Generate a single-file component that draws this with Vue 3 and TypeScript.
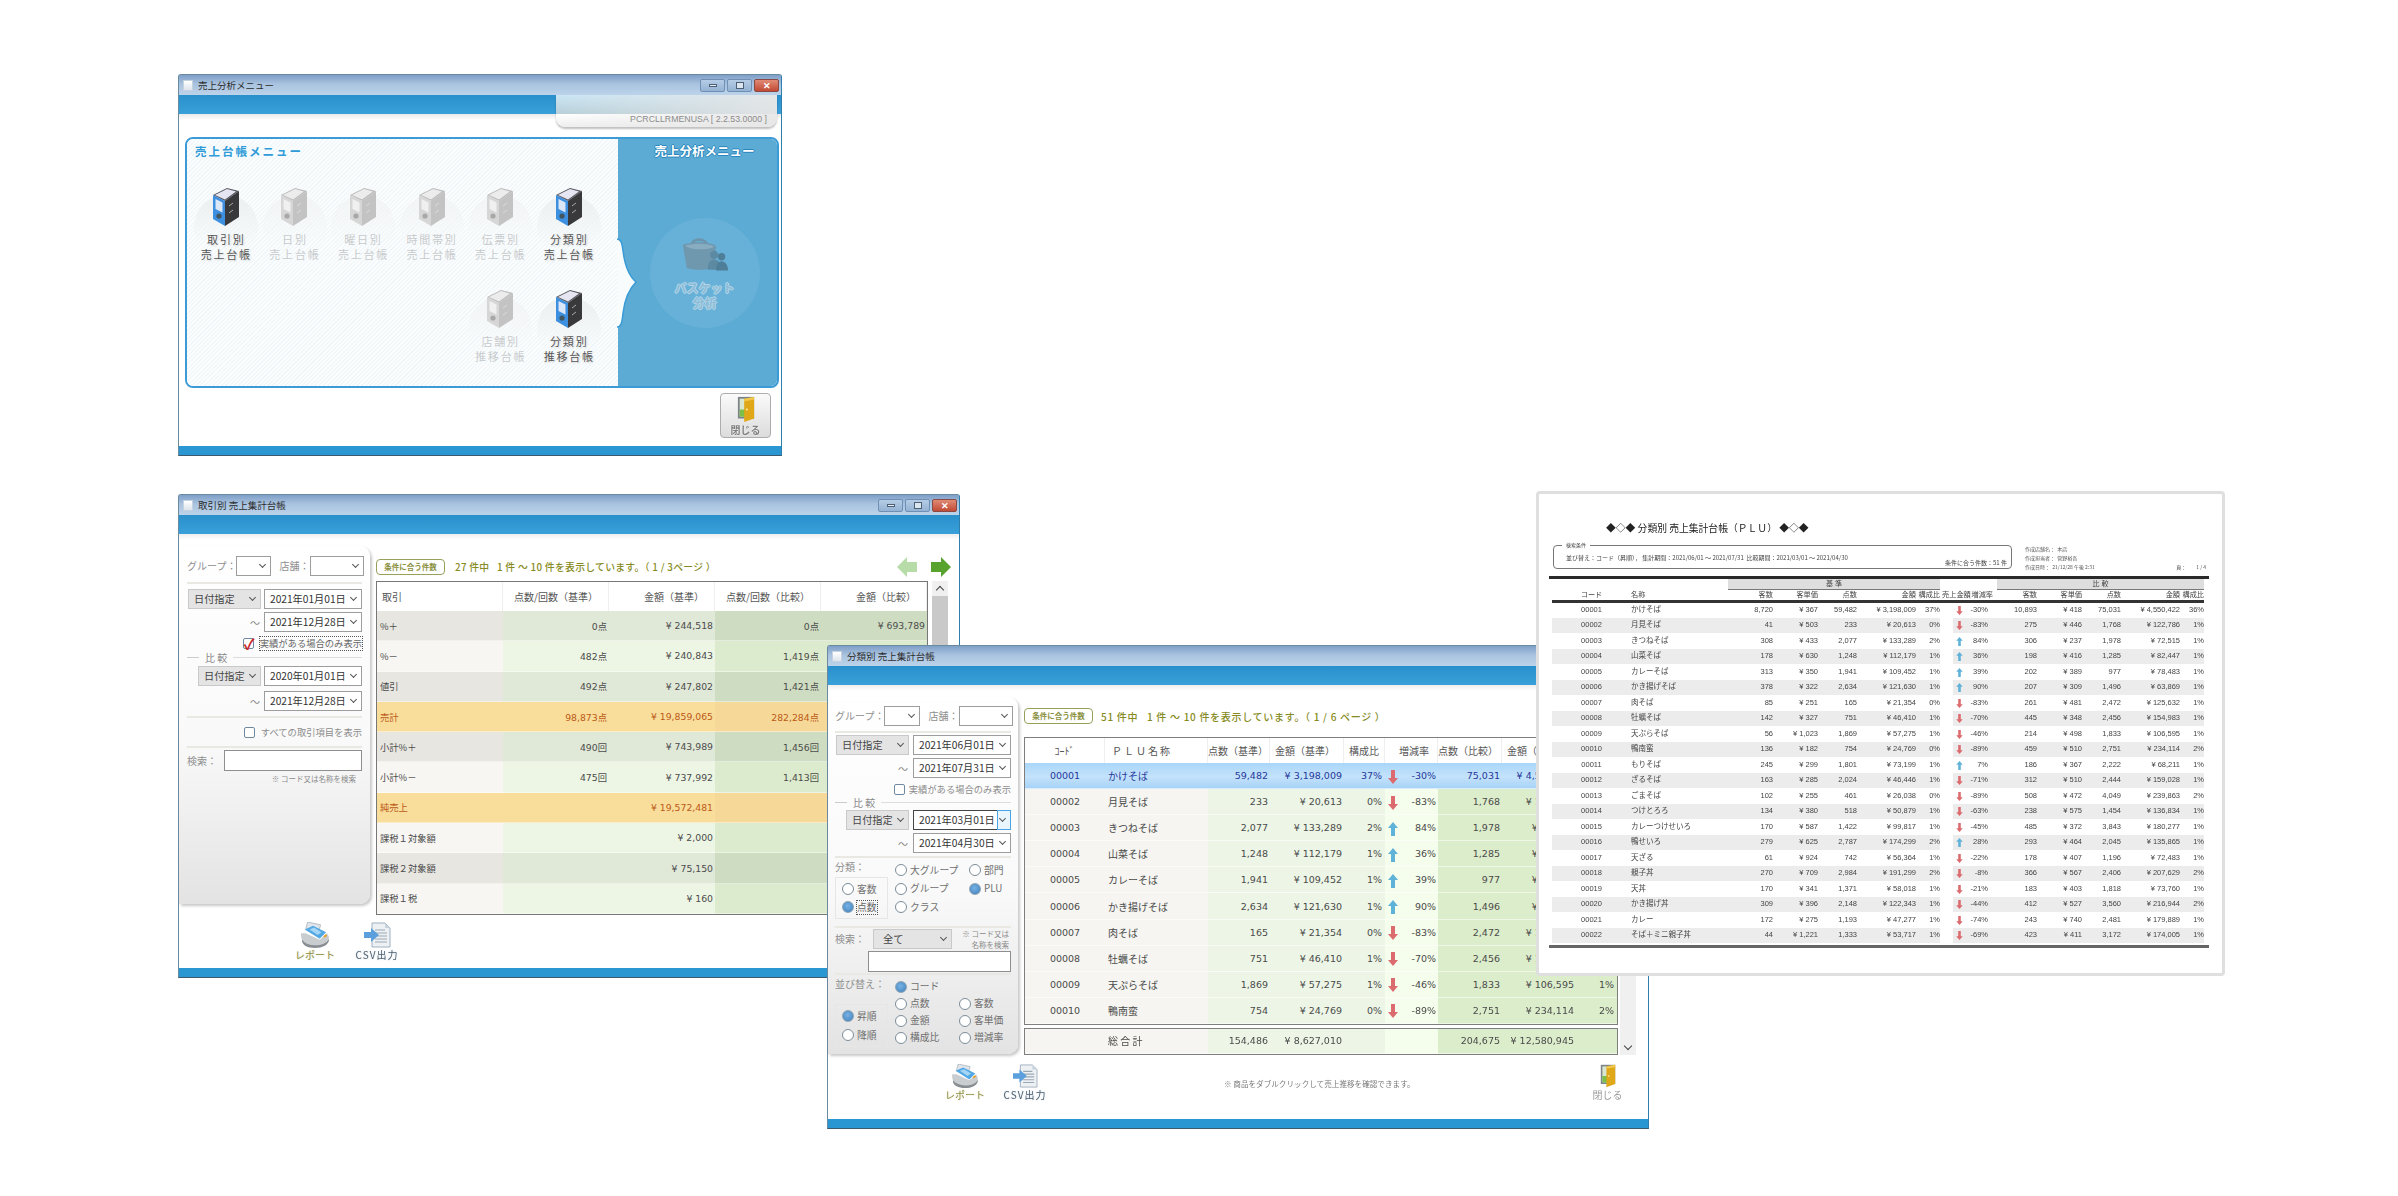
<script setup lang="ts">
interface Plu {
  code: string
  name: string
  customers: string
  unit: string
  qty: string
  amount: string
  ratio: string
  up: boolean
  rate: string
  customers2: string
  unit2: string
  qty2: string
  amount2: string
  ratio2: string
}

interface LedgerItem {
  top: string
  bottom: string
  on: boolean
  startsRow?: boolean
}

interface TradeRow {
  name: string
  qty: string
  amount: string
  qty2: string
  amount2: string
  total?: boolean
}

const ledgerItems: LedgerItem[] = [
  { top: '取引別', bottom: '売上台帳', on: true },
  { top: '日別', bottom: '売上台帳', on: false },
  { top: '曜日別', bottom: '売上台帳', on: false },
  { top: '時間帯別', bottom: '売上台帳', on: false },
  { top: '伝票別', bottom: '売上台帳', on: false },
  { top: '分類別', bottom: '売上台帳', on: true },
  { top: '店舗別', bottom: '推移台帳', on: false, startsRow: true },
  { top: '分類別', bottom: '推移台帳', on: true }
]

const tradeRows: TradeRow[] = [
  { name: '%＋', qty: '0点', amount: '¥ 244,518', qty2: '0点', amount2: '¥ 693,789' },
  { name: '%－', qty: '482点', amount: '¥ 240,843', qty2: '1,419点', amount2: '' },
  { name: '値引', qty: '492点', amount: '¥ 247,802', qty2: '1,421点', amount2: '' },
  { name: '売計', qty: '98,873点', amount: '¥ 19,859,065', qty2: '282,284点', amount2: '', total: true },
  { name: '小計%＋', qty: '490回', amount: '¥ 743,989', qty2: '1,456回', amount2: '' },
  { name: '小計%－', qty: '475回', amount: '¥ 737,992', qty2: '1,413回', amount2: '' },
  { name: '純売上', qty: '', amount: '¥ 19,572,481', qty2: '', amount2: '', total: true },
  { name: '課税１対象額', qty: '', amount: '¥ 2,000', qty2: '', amount2: '' },
  { name: '課税２対象額', qty: '', amount: '¥ 75,150', qty2: '', amount2: '' },
  { name: '課税１税', qty: '', amount: '¥ 160', qty2: '', amount2: '' }
]

const raw = `00001|かけそば|8,720|367|59,482|3,198,009|37%|d|-30%|10,893|418|75,031|4,550,422|36%
00002|月見そば|41|503|233|20,613|0%|d|-83%|275|446|1,768|122,786|1%
00003|きつねそば|308|433|2,077|133,289|2%|u|84%|306|237|1,978|72,515|1%
00004|山菜そば|178|630|1,248|112,179|1%|u|36%|198|416|1,285|82,447|1%
00005|カレーそば|313|350|1,941|109,452|1%|u|39%|202|389|977|78,483|1%
00006|かき揚げそば|378|322|2,634|121,630|1%|u|90%|207|309|1,496|63,869|1%
00007|肉そば|85|251|165|21,354|0%|d|-83%|261|481|2,472|125,632|1%
00008|牡蠣そば|142|327|751|46,410|1%|d|-70%|445|348|2,456|154,983|1%
00009|天ぷらそば|56|1,023|1,869|57,275|1%|d|-46%|214|498|1,833|106,595|1%
00010|鴨南蛮|136|182|754|24,769|0%|d|-89%|459|510|2,751|234,114|2%
00011|もりそば|245|299|1,801|73,199|1%|u|7%|186|367|2,222|68,211|1%
00012|ざるそば|163|285|2,024|46,446|1%|d|-71%|312|510|2,444|159,028|1%
00013|ごまそば|102|255|461|26,038|0%|d|-89%|508|472|4,049|239,863|2%
00014|つけとろろ|134|380|518|50,879|1%|d|-63%|238|575|1,454|136,834|1%
00015|カレーつけせいろ|170|587|1,422|99,817|1%|d|-45%|485|372|3,843|180,277|1%
00016|鴨せいろ|279|625|2,787|174,299|2%|u|28%|293|464|2,045|135,865|1%
00017|天ざる|61|924|742|56,364|1%|d|-22%|178|407|1,196|72,483|1%
00018|親子丼|270|709|2,984|191,299|2%|d|-8%|366|567|2,406|207,629|2%
00019|天丼|170|341|1,371|58,018|1%|d|-21%|183|403|1,818|73,760|1%
00020|かき揚げ丼|309|396|2,148|122,343|1%|d|-44%|412|527|3,560|216,944|2%
00021|カレー|172|275|1,193|47,277|1%|d|-74%|243|740|2,481|179,889|1%
00022|そば＋ミニ親子丼|44|1,221|1,333|53,717|1%|d|-69%|423|411|3,172|174,005|1%`

const plus: Plu[] = raw.split('\n').map((line) => {
  const c = line.split('|')
  return {
    code: c[0],
    name: c[1],
    customers: c[2],
    unit: '¥ ' + c[3],
    qty: c[4],
    amount: '¥ ' + c[5],
    ratio: c[6],
    up: c[7] === 'u',
    rate: c[8],
    customers2: c[9],
    unit2: '¥ ' + c[10],
    qty2: c[11],
    amount2: '¥ ' + c[12],
    ratio2: c[13]
  }
})
</script>

<template>
  <div class="desk">
    <!-- shared icons -->
    <svg class="defs" aria-hidden="true">
      <symbol id="door" viewBox="0 0 24 30">
        <path d="M3 1h18v24H3z" fill="#7d8488" />
        <path d="M5 3h6v20H5z" fill="#d9e6d2" />
        <path d="M5 15h6v8H5z" fill="#7cc04a" />
        <path d="M10 3l11-2v24l-11 4z" fill="#e0a818" />
        <path d="M10 3l11-2v3l-11 2z" fill="#f2c84a" />
        <circle cx="13" cy="15" r="1" fill="#fff4c0" />
      </symbol>
      <symbol id="printer" viewBox="0 0 32 28">
        <path d="M8 0l14 3-2 8L6 8z" fill="#dfe5ea" stroke="#98a4ac" stroke-width=".7" />
        <path d="M5 8l9-4 14 7-7 7z" fill="#52a8e4" />
        <path d="M10 8l5-2 8 5-4 3z" fill="#a5d5f5" />
        <path d="M1 12C0 20 6 27 16 27c9 0 15-4 15-11l-2-4-8 7-15-7z" fill="#c9cdd0" />
        <path d="M2 19c3 4 8 6 14 6 7 0 13-2 15-7v2c-1 5-7 8-15 8S3 25 2 21z" fill="#878d91" />
        <path d="M25 15l3-2 1 2-3 2z" fill="#e8a02c" />
      </symbol>
      <symbol id="csv" viewBox="0 0 28 26">
        <path d="M9 1h13l5 5v19H9z" fill="#eef1f4" stroke="#9fb0bf" />
        <path d="M12 8h10M12 11h12M12 14h12M12 17h12M12 20h12" stroke="#9aa8b4" stroke-width="1.2" />
        <path d="M22 1v5h5z" fill="#c6d2dc" />
        <path d="M1 10h7V6l8 7-8 7v-4H1z" fill="#5b9fdc" />
      </symbol>
      <symbol id="up" viewBox="0 0 10 14">
        <path d="M5 0l5 6H7v8H3V6H0z" fill="#5fb2d8" />
      </symbol>
      <symbol id="down" viewBox="0 0 10 14">
        <path d="M3 0h4v8h3l-5 6-5-6h3z" fill="#dc6b6f" />
      </symbol>
    </svg>

    <!-- 売上分析メニュー -->
    <section class="win menu-win">
      <header class="titlebar">
        <span class="doc-ico"></span>
        <span class="win-title">売上分析メニュー</span>
        <span class="ctrls">
          <i class="ctrl"><b class="min"></b></i>
          <i class="ctrl"><b class="max"></b></i>
          <i class="ctrl close">✕</i>
        </span>
      </header>
      <div class="band"></div>
      <div class="version">PCRCLLRMENUSA [ 2.2.53.0000 ]</div>
      <div class="shade"></div>

      <div class="panel">
        <div class="panel-left">
          <h2 class="panel-title">売上台帳メニュー</h2>
          <div class="ledger-grid">
            <div
              v-for="(item, i) in ledgerItems"
              :key="i"
              class="ledger"
              :class="{ off: !item.on, 'row-start': item.startsRow }"
            >
              <svg class="binder" viewBox="0 0 27 38">
                <path class="b-top" d="M0 7l14-7 12 3-14 10z" />
                <path class="b-page" d="M2 7l12-6 9 2.500-11 8z" />
                <path class="b-front" d="M0 7l12 6v25L0 31z" />
                <path class="b-side" d="M12 13L26 3v26l-14 9z" />
                <path class="b-label" d="M2.500 11l7 3.500v10l-7-3.500z" />
                <circle class="b-hole" cx="6" cy="28" r="2.600" />
                <path class="b-mark" d="M16 18l4-3M16 25l4-3" />
              </svg>
              <div class="ledger-label">{{ item.top }}<br />{{ item.bottom }}</div>
            </div>
          </div>
        </div>
        <div class="panel-right">
          <svg class="bulge" viewBox="0 0 22 90" width="22" height="90">
            <path
              d="M0 1C4 1 5 5 6 13C8 29 13 39 19 44C13 50 8 59 6 75C5 85 4 89 0 89Z"
              fill="#f9fcfd"
            />
            <path
              d="M0 1C4 1 5 5 6 13C8 29 13 39 19 44C13 50 8 59 6 75C5 85 4 89 0 89"
              fill="none"
              stroke="#3a9bd6"
              stroke-width="1.500"
            />
          </svg>
          <h2 class="analysis-title">売上分析メニュー</h2>
          <div class="basket">
            <svg class="basket-ico" viewBox="0 0 50 38">
              <path d="M10 10c1-9 16-9 18 0" fill="none" stroke="#6d94aa" stroke-width="3" />
              <path d="M1 9c10-4 28-4 36 1l-3 24c-8 3-22 3-29 0z" fill="#6f97ad" />
              <path d="M3 10c10-3 25-3 32 1-8 4-24 4-32-1z" fill="#88adc0" />
              <circle cx="35" cy="20" r="4.500" fill="#5d8aa3" />
              <path d="M28 36c0-8 3-11 7-11s7 3 7 11z" fill="#5d8aa3" />
              <circle cx="43" cy="22" r="4" fill="#4f7e98" />
              <path d="M37 37c0-7 3-10 6-10s7 3 7 10z" fill="#4f7e98" />
            </svg>
            <div class="basket-label">バスケット<br />分析</div>
          </div>
        </div>
      </div>

      <div class="menu-foot">
        <button class="close-btn">
          <svg class="door"><use href="#door" /></svg>
          <span>閉じる</span>
        </button>
      </div>
      <div class="band band-foot"></div>
    </section>

    <!-- 取引別 売上集計台帳 -->
    <section class="win trade-win">
      <header class="titlebar">
        <span class="doc-ico"></span>
        <span class="win-title">取引別 売上集計台帳</span>
        <span class="ctrls">
          <i class="ctrl"><b class="min"></b></i>
          <i class="ctrl"><b class="max"></b></i>
          <i class="ctrl close">✕</i>
        </span>
      </header>
      <div class="band"></div>
      <div class="win-body">
        <aside class="side trade-side">
          <div class="row row-21">
            <span class="lbl">グループ：</span>
            <div class="sel w34"></div>
            <span class="lbl lbl-store">店舗：</span>
            <div class="sel w54"></div>
          </div>
          <div class="rule"></div>
          <div class="row row-end mt5">
            <div class="sel grey w73">日付指定</div>
            <div class="sel date">2021年01月01日</div>
          </div>
          <div class="row row-end mt3">
            <span class="tilde">～</span>
            <div class="sel date">2021年12月28日</div>
          </div>
          <div class="row row-end check-row mt4">
            <span class="chk on">✓</span>
            <span class="chk-label dotted">実績がある場合のみ表示</span>
          </div>
          <div class="legend"><span>比 較</span></div>
          <div class="row row-end mt3">
            <div class="sel grey w63">日付指定</div>
            <div class="sel date">2020年01月01日</div>
          </div>
          <div class="row row-end mt5">
            <span class="tilde">～</span>
            <div class="sel date">2021年12月28日</div>
          </div>
          <div class="rule mt5"></div>
          <div class="row row-end check-row mt7">
            <span class="chk"></span>
            <span class="chk-label">すべての取引項目を表示</span>
          </div>
          <div class="rule mt7"></div>
          <div class="row search-row mt2">
            <span class="lbl">検索：</span>
            <div class="text-box"></div>
          </div>
          <div class="hint">※ コード又は名称を検索</div>
        </aside>

        <div class="trade-main">
          <div class="info trade-info">
            <span class="tag">条件に合う件数</span>
            <span class="info-text">27 件中 &nbsp; 1 件 ～ 10 件を表示しています。（ 1 / 3ページ ）</span>
            <span class="pager">
              <svg class="nav-arrow faded" viewBox="0 0 20 20"><path d="M0 10L10 0v5h10v10H10v5z" fill="#b7dca8" /></svg>
              <svg class="nav-arrow" viewBox="0 0 20 20"><path d="M20 10L10 0v5H0v10h10v5z" fill="#58a32e" /></svg>
            </span>
          </div>
          <div class="trade-scroll">
            <table class="trade-table">
              <colgroup>
                <col class="tc1" /><col class="tc2" /><col class="tc2" /><col class="tc2" /><col />
              </colgroup>
              <thead>
                <tr>
                  <th class="left">取引</th>
                  <th>点数/回数（基準）</th>
                  <th>金額（基準）</th>
                  <th>点数/回数（比較）</th>
                  <th>金額（比較）</th>
                </tr>
              </thead>
              <tbody>
                <tr
                  v-for="(row, i) in tradeRows"
                  :key="row.name"
                  :class="{ total: row.total, dark: i % 2 === 0 }"
                >
                  <td class="t-name">{{ row.name }}</td>
                  <td class="t-base">{{ row.qty }}</td>
                  <td class="t-base">{{ row.amount }}</td>
                  <td class="t-cmp">{{ row.qty2 }}</td>
                  <td class="t-cmp">{{ row.amount2 }}</td>
                </tr>
              </tbody>
            </table>
            <div class="scrollbar trade-bar">
              <span class="chev-up"></span>
              <span class="thumb"></span>
            </div>
          </div>
        </div>
      </div>
      <div class="win-foot trade-foot">
        <div class="tool">
          <svg class="tool-ico"><use href="#printer" /></svg>
          <span class="tool-report">レポート</span>
        </div>
        <div class="tool">
          <svg class="tool-ico"><use href="#csv" /></svg>
          <span class="tool-csv">CSV出力</span>
        </div>
      </div>
      <div class="band band-foot"></div>
    </section>

    <!-- 分類別 売上集計台帳 -->
    <section class="win plu-win">
      <header class="titlebar">
        <span class="doc-ico"></span>
        <span class="win-title">分類別 売上集計台帳</span>
      </header>
      <div class="band"></div>
      <div class="win-body">
        <aside class="side plu-side">
          <div class="row row-21">
            <span class="lbl">グループ：</span>
            <div class="sel w36"></div>
            <span class="lbl lbl-store">店舗：</span>
            <div class="sel w54"></div>
          </div>
          <div class="rule mt5"></div>
          <div class="row row-end mt2">
            <div class="sel grey w73">日付指定</div>
            <div class="sel date">2021年06月01日</div>
          </div>
          <div class="row row-end mt3">
            <span class="tilde">～</span>
            <div class="sel date">2021年07月31日</div>
          </div>
          <div class="row row-end check-row mt4">
            <span class="chk"></span>
            <span class="chk-label">実績がある場合のみ表示</span>
          </div>
          <div class="legend plu-legend"><span>比 較</span></div>
          <div class="row row-end mt2">
            <div class="sel grey w63">日付指定</div>
            <div class="sel date focus">2021年03月01日</div>
          </div>
          <div class="row row-end mt3">
            <span class="tilde">～</span>
            <div class="sel date">2021年04月30日</div>
          </div>
          <div class="rule mt3"></div>

          <div class="opts class-opts">
            <div class="opts-left">
              <span class="lbl">分類：</span>
              <div class="opt-box box-a">
                <label class="radio"><i class="r"></i>客数</label>
                <label class="radio"><i class="r on"></i><span class="dotted">点数</span></label>
              </div>
            </div>
            <div class="opt-grid class-grid">
              <label class="radio"><i class="r"></i>大グループ</label>
              <label class="radio"><i class="r"></i>部門</label>
              <label class="radio"><i class="r"></i>グループ</label>
              <label class="radio"><i class="r on"></i>PLU</label>
              <label class="radio"><i class="r"></i>クラス</label>
            </div>
          </div>
          <div class="rule mt0"></div>

          <div class="search-block">
            <span class="lbl">検索：</span>
            <div class="sel grey w79 all">全て</div>
            <div class="hint small">※ コード又は<br />名称を検索</div>
          </div>
          <div class="row row-end">
            <div class="text-box wide"></div>
          </div>
          <div class="rule mt1"></div>

          <div class="opts sort-opts">
            <div class="opts-left">
              <span class="lbl">並び替え：</span>
              <div class="opt-box box-b">
                <label class="radio"><i class="r on"></i>昇順</label>
                <label class="radio"><i class="r"></i>降順</label>
              </div>
            </div>
            <div class="opt-grid sort-grid">
              <label class="radio full"><i class="r on"></i>コード</label>
              <label class="radio"><i class="r"></i>点数</label>
              <label class="radio"><i class="r"></i>客数</label>
              <label class="radio"><i class="r"></i>金額</label>
              <label class="radio"><i class="r"></i>客単価</label>
              <label class="radio"><i class="r"></i>構成比</label>
              <label class="radio"><i class="r"></i>増減率</label>
            </div>
          </div>
        </aside>

        <div class="plu-main">
          <div class="info plu-info">
            <span class="tag">条件に合う件数</span>
            <span class="info-text wide-text">51 件中 &nbsp; 1 件 ～ 10 件を表示しています。（ 1 / 6 ページ ）</span>
          </div>
          <table class="plu-table">
            <colgroup>
              <col class="pc1" /><col class="pc2" /><col class="pc3" /><col class="pc4" />
              <col class="pc5" /><col class="pc6" /><col class="pc7" /><col class="pc4" /><col class="pc5" />
            </colgroup>
            <thead>
              <tr>
                <th class="center">ｺｰﾄﾞ</th>
                <th class="left plu-name">ＰＬＵ名称</th>
                <th>点数（基準）</th>
                <th>金額（基準）</th>
                <th class="center">構成比</th>
                <th>増減率</th>
                <th>点数（比較）</th>
                <th>金額（比較）</th>
                <th class="center">構成比</th>
              </tr>
            </thead>
            <tbody>
              <tr v-for="(p, i) in plus.slice(0, 10)" :key="p.code" :class="{ picked: i === 0 }">
                <td class="center c-id">{{ p.code }}</td>
                <td class="c-id name">{{ p.name }}</td>
                <td class="c-base">{{ p.qty }}</td>
                <td class="c-base">{{ p.amount }}</td>
                <td class="c-base r3">{{ p.ratio }}</td>
                <td class="c-rate">
                  <span class="rate-cell">
                    <svg class="trend"><use :href="p.up ? '#up' : '#down'" /></svg>
                    {{ p.rate }}
                  </span>
                </td>
                <td class="c-cmp">{{ p.qty2 }}</td>
                <td class="c-cmp">{{ p.amount2 }}</td>
                <td class="c-cmp r3">{{ p.ratio2 }}</td>
              </tr>
            </tbody>
          </table>
          <table class="plu-table plu-total">
            <colgroup>
              <col class="pc1" /><col class="pc2" /><col class="pc3" /><col class="pc4" />
              <col class="pc5" /><col class="pc6" /><col class="pc7" /><col class="pc4" /><col class="pc5" />
            </colgroup>
            <tbody>
              <tr>
                <td class="c-id"></td>
                <td class="c-id name">総 合 計</td>
                <td class="c-base">154,486</td>
                <td class="c-base">¥ 8,627,010</td>
                <td class="c-base"></td>
                <td class="c-rate"></td>
                <td class="c-cmp">204,675</td>
                <td class="c-cmp">¥ 12,580,945</td>
                <td class="c-cmp"></td>
              </tr>
            </tbody>
          </table>
        </div>
        <div class="scrollbar plu-bar"><span class="chev-down"></span></div>
      </div>
      <div class="win-foot plu-foot">
        <div class="tool">
          <svg class="tool-ico"><use href="#printer" /></svg>
          <span class="tool-report">レポート</span>
        </div>
        <div class="tool">
          <svg class="tool-ico"><use href="#csv" /></svg>
          <span class="tool-csv">CSV出力</span>
        </div>
        <span class="dbl-note">※ 商品をダブルクリックして売上推移を確認できます。</span>
        <div class="tool plain-close">
          <svg class="door"><use href="#door" /></svg>
          <span>閉じる</span>
        </div>
      </div>
      <div class="band band-foot"></div>
    </section>

    <!-- 帳票プレビュー -->
    <section class="win report">
      <h1 class="rep-title">◆◇◆ 分類別 売上集計台帳（ＰＬＵ） ◆◇◆</h1>
      <div class="rep-top">
        <div class="cond">
          <span class="cond-legend">検索条件</span>
          <span class="cond-text">並び替え：コード（昇順）， 集計期間：2021/06/01 ～ 2021/07/31 &nbsp;比較期間：2021/03/01 ～ 2021/04/30</span>
          <span class="cond-count">条件に合う件数：51 件</span>
        </div>
        <div class="meta">
          <div>作成店舗名： &nbsp;本店</div>
          <div>作成担当者： &nbsp;管野裕吾</div>
          <div class="meta-last"><span>作成日時： &nbsp;21/12/28 午後 2:31</span><span>頁： &nbsp; &nbsp; &nbsp; &nbsp; 1 / 4</span></div>
        </div>
      </div>
      <div class="thick"></div>
      <table class="rep-table">
        <colgroup>
          <col class="rc-code" /><col class="rc-name" /><col class="rc45" /><col class="rc45" /><col class="rc39" />
          <col class="rc60" /><col class="rc24" /><col class="rc26" /><col class="rc22" /><col class="rc10" />
          <col class="rc41" /><col class="rc45" /><col class="rc39" /><col class="rc60" /><col class="rc24" />
        </colgroup>
        <thead>
          <tr class="group">
            <th colspan="2" class="none"></th>
            <th colspan="5" class="grp">基 準</th>
            <th colspan="3" class="none"></th>
            <th colspan="5" class="grp">比 較</th>
          </tr>
          <tr class="heads">
            <th class="center">コード</th>
            <th class="left">名称</th>
            <th>客数</th>
            <th>客単価</th>
            <th>点数</th>
            <th>金額</th>
            <th>構成比</th>
            <th class="sales-head">売上金額</th>
            <th colspan="2" class="rate-head">増減率</th>
            <th>客数</th>
            <th>客単価</th>
            <th>点数</th>
            <th>金額</th>
            <th>構成比</th>
          </tr>
        </thead>
        <tbody>
          <tr v-for="p in plus" :key="p.code">
            <td class="center">{{ p.code }}</td>
            <td class="left">{{ p.name }}</td>
            <td>{{ p.customers }}</td>
            <td>{{ p.unit }}</td>
            <td>{{ p.qty }}</td>
            <td>{{ p.amount }}</td>
            <td>{{ p.ratio }}</td>
            <td class="arrow-cell"><svg class="trend small"><use :href="p.up ? '#up' : '#down'" /></svg></td>
            <td>{{ p.rate }}</td>
            <td></td>
            <td>{{ p.customers2 }}</td>
            <td>{{ p.unit2 }}</td>
            <td>{{ p.qty2 }}</td>
            <td>{{ p.amount2 }}</td>
            <td>{{ p.ratio2 }}</td>
          </tr>
        </tbody>
      </table>
      <div class="end-line"></div>
    </section>
  </div>
</template>

<style>
html,
body {
  margin: 0;
  background: #fff;
}
</style>

<style scoped>
.desk {
  position: relative;
  width: 2398px;
  height: 1196px;
  overflow: hidden;
  background: #fff;
  font-family: "Noto Sans CJK JP", "Liberation Sans", sans-serif;
  color: #555;
}

.defs {
  position: absolute;
  width: 0;
  height: 0;
}

/* windows lie on a free canvas */
.win {
  position: absolute;
  box-sizing: border-box;
  display: flex;
  flex-direction: column;
  background: #fff;
  filter: blur(0.4px);
}

.menu-win,
.trade-win,
.plu-win {
  border: 1px solid #6a8aa0;
  border-right-color: #2e7fae;
  border-bottom-color: #3c5a6c;
  border-radius: 3px 3px 0 0;
}

.menu-win {
  left: 178px;
  top: 74px;
  width: 604px;
  height: 382px;
}

.trade-win {
  left: 178px;
  top: 494px;
  width: 782px;
  height: 484px;
}

.plu-win {
  left: 827px;
  top: 645px;
  width: 822px;
  height: 484px;
}

.report {
  left: 1536px;
  top: 491px;
  width: 689px;
  height: 485px;
  border: 3px solid #dfdfdf;
  border-radius: 4px;
  padding: 0 13px 0 10px;
  filter: blur(0.55px);
}

.titlebar {
  flex: none;
  height: 20px;
  display: flex;
  align-items: center;
  padding-left: 4px;
  background: linear-gradient(#7f9fc8, #a9c3df 45%, #bcd3ea);
}

.doc-ico {
  width: 10px;
  height: 11px;
  background: linear-gradient(#fff, #dde4ec);
  border: 1px solid #c6d2e0;
  box-sizing: border-box;
  margin-right: 5px;
}

.win-title {
  font-size: 9.500px;
  color: #2c2c2c;
}

.ctrls {
  margin-left: auto;
  margin-right: 2px;
  display: flex;
  gap: 2px;
}

.ctrl {
  width: 25px;
  height: 13px;
  display: flex;
  align-items: center;
  justify-content: center;
  box-sizing: border-box;
  border: 1px solid #6f8fb4;
  border-radius: 2px;
  background: linear-gradient(#b6cde6, #94b2d3);
  font-style: normal;
}

.ctrl.close {
  background: linear-gradient(#e08a74, #c24a35);
  border-color: #8a4a44;
  color: #fff;
  font-size: 9px;
  font-weight: bold;
  line-height: 1;
}

.min {
  width: 8px;
  height: 3px;
  background: #e8eef5;
  border: 1px solid #4c5f75;
  box-sizing: border-box;
}

.max {
  width: 8px;
  height: 7px;
  border: 1px solid #4c5f75;
  box-sizing: border-box;
  background: #dbe5f0;
}

.band {
  flex: none;
  height: 19px;
  background: linear-gradient(#2a90cc, #3aa0d9);
}

.band-foot {
  height: 9px;
  background: #2b97d2;
  margin-top: auto;
}

.version {
  position: absolute;
  top: 20px;
  left: 377px;
  width: 221px;
  height: 32px;
  box-sizing: border-box;
  padding: 17px 10px 0 0;
  text-align: right;
  font-family: "Liberation Sans", sans-serif;
  font-size: 8.800px;
  line-height: 14px;
  color: #8b8b8b;
  border-radius: 0 0 9px 9px;
  background: linear-gradient(90deg, rgba(255, 255, 255, 0), rgba(230, 230, 230, 0.9)),
    linear-gradient(#cbe6f4 0, #b8cfd8 19px, #fff 19px, #eeeeee 32px);
  box-shadow: 0 2px 2px rgba(0, 0, 0, 0.25);
}

.shade {
  flex: none;
  height: 6px;
  background: linear-gradient(#eaeaea, #fff);
}

.panel {
  flex: none;
  display: flex;
  box-sizing: border-box;
  height: 251px;
  margin: 17px 2px 0 6px;
  border: 2px solid #3a9bd6;
  border-radius: 8px;
  overflow: hidden;
}

.panel-left {
  width: 431px;
  flex: none;
  box-sizing: border-box;
  padding: 4px 0 0 5px;
  background: repeating-linear-gradient(135deg, #f2f8fa 0 1.500px, #fbfdfe 1.500px 3px);
}

.panel-title {
  margin: 0 0 0 3px;
  font-size: 11.500px;
  line-height: 16px;
  letter-spacing: 2px;
  font-weight: 700;
  color: #2f9bd8;
}

.ledger-grid {
  margin-top: 29px;
  display: grid;
  grid-template-columns: repeat(6, 68.600px);
  grid-auto-rows: 102px;
}

.ledger {
  position: relative;
  display: flex;
  flex-direction: column;
  align-items: center;
}

.ledger::before {
  content: "";
  position: absolute;
  top: 7px;
  left: 2px;
  width: 64px;
  height: 64px;
  border-radius: 50%;
  background: linear-gradient(#ecefef, rgba(248, 250, 250, 0) 80%);
}

.ledger.off::before {
  background: linear-gradient(#f2f4f5, rgba(248, 250, 250, 0) 80%);
}

.ledger.row-start {
  grid-column: 5;
}

.binder {
  position: relative;
  width: 27px;
  height: 38px;
}

.b-top {
  fill: #5a5a62;
}

.b-page {
  fill: #e6e6f2;
}

.b-front {
  fill: #3d8fe0;
}

.b-side {
  fill: #39393b;
}

.b-label {
  fill: #dbe6f7;
}

.b-hole {
  fill: #41555f;
}

.b-mark {
  stroke: #c5c5c5;
  stroke-width: 0.800;
  fill: none;
}

.off .b-top {
  fill: #bbb;
}

.off .b-page {
  fill: #ececec;
}

.off .b-front {
  fill: #d6d6d6;
}

.off .b-side {
  fill: #c3c3c3;
}

.off .b-label {
  fill: #f0f0f0;
}

.off .b-hole {
  fill: #a8a8a8;
}

.off .b-mark {
  stroke: #e2e2e2;
}

.ledger-label {
  position: relative;
  margin-top: 6px;
  text-align: center;
  font-size: 11px;
  font-weight: 400;
  line-height: 15px;
  letter-spacing: 1.800px;
  color: #555;
  text-shadow: 0 0 2px #fff, 1px 1px 2px #ccc;
  white-space: nowrap;
}

.off .ledger-label {
  color: #c6cacc;
  text-shadow: 0 0 2px #fff;
}

.panel-right {
  position: relative;
  flex: 1;
  display: flex;
  flex-direction: column;
  align-items: center;
  padding: 4px 0 0 14px;
  background: #5babd5;
}

.bulge {
  position: absolute;
  top: 99px;
  left: -1px;
}

.analysis-title {
  margin: 0;
  font-size: 12.500px;
  line-height: 16px;
  font-weight: 700;
  color: #fff;
  white-space: nowrap;
  text-shadow: -1px 0 #2a86bd, 1px 0 #2a86bd, 0 -1px #2a86bd, 0 1px #2a86bd;
}

.basket {
  margin-top: 59px;
  width: 110px;
  height: 110px;
  flex: none;
  box-sizing: border-box;
  padding-top: 18px;
  border-radius: 50%;
  background: rgba(255, 255, 255, 0.08);
  display: flex;
  flex-direction: column;
  align-items: center;
}

.basket-ico {
  width: 46px;
  height: 36px;
}

.basket-label {
  margin-top: 8px;
  text-align: center;
  font-size: 12px;
  font-weight: 700;
  line-height: 15px;
  color: #8cbcd8;
  white-space: nowrap;
  text-shadow: -1px 0 #b4d6e8, 1px 0 #b4d6e8, 0 -1px #b4d6e8, 0 1px #b4d6e8;
}

.menu-foot {
  display: flex;
  justify-content: flex-end;
  padding: 5px 10px 0 0;
}

.close-btn {
  width: 51px;
  height: 45px;
  padding: 2px 0 0;
  border: 1px solid #adadad;
  border-radius: 4px;
  background: linear-gradient(#fafafa, #dcdcdc);
  display: flex;
  flex-direction: column;
  align-items: center;
  font-family: inherit;
  font-size: 10px;
  line-height: 13px;
  font-weight: 700;
  color: #808080;
  text-shadow: 0 0 2px #fff;
}

.door {
  width: 22px;
  height: 27px;
}

.win-body {
  flex: none;
  display: flex;
  align-items: flex-start;
}

.trade-win .win-body,
.plu-win .win-body {
  padding-top: 12px;
  background: linear-gradient(#eee, #fff 6px);
}

.side {
  flex: none;
  box-sizing: border-box;
  border-radius: 0 10px 10px 0;
  background: linear-gradient(#fff, #f9f9f9 55%, #e3e3e3);
  box-shadow: 2px 2px 3px rgba(0, 0, 0, 0.22);
}

.trade-side {
  width: 191px;
  height: 358px;
  padding: 9px 8px 0 8px;
}

.plu-side {
  width: 190px;
  height: 357px;
  padding: 8px 7px 0 7px;
}

.row {
  display: flex;
  align-items: center;
}

.row-21 {
  height: 21px;
}

.row-end {
  justify-content: flex-end;
  gap: 3px;
}

.lbl {
  font-size: 10px;
  line-height: 12px;
  color: #8f8f8f;
  white-space: nowrap;
}

.lbl-store {
  margin: 0 1px 0 8px;
}

.sel {
  position: relative;
  box-sizing: border-box;
  height: 20px;
  flex: none;
  border: 1px solid #9d9d9d;
  background: #fff;
  font-size: 10.200px;
  line-height: 18px;
  padding-left: 5px;
  color: #333;
  white-space: nowrap;
}

.sel::after {
  content: "";
  position: absolute;
  right: 5px;
  top: 5px;
  width: 4px;
  height: 4px;
  border-right: 1px solid #555;
  border-bottom: 1px solid #555;
  transform: rotate(45deg);
}

.sel.grey {
  background: #e4e4e4;
  border-color: #c9c9c9;
  color: #444;
}

.sel.date {
  width: 98px;
}

.sel.focus {
  border-color: #444;
}

.sel.focus::before {
  content: "";
  position: absolute;
  right: -1px;
  top: -1px;
  width: 14px;
  height: 20px;
  box-sizing: border-box;
  border: 1px solid #4aa3e6;
  background: #eaf6fe;
}

.w34 { width: 35px; margin-left: 0; }
.w36 { width: 36px; }
.w54 { width: 54px; }
.w63 { width: 63px; }
.w73 { width: 73px; }
.w79 { width: 79px; }

.sel.all {
  margin-left: 8px;
  padding-left: 9px;
}

.tilde {
  font-size: 10px;
  color: #888;
  margin-right: 1px;
}

.check-row {
  height: 14px;
  gap: 6px;
}

.chk {
  width: 11px;
  height: 11px;
  flex: none;
  box-sizing: border-box;
  border: 1px solid #6f8aa0;
  border-radius: 2px;
  background: #fff;
  color: #c8282c;
  font-size: 15px;
  font-weight: 700;
  line-height: 9px;
  overflow: visible;
}

.chk-label {
  font-size: 9.300px;
  line-height: 13px;
  color: #8c8c8c;
  white-space: nowrap;
}

.dotted {
  outline: 1px dotted #555;
  color: #666;
}

.rule {
  height: 2px;
  margin-top: 6px;
  background: #e9e8e2;
}

.legend {
  display: flex;
  align-items: center;
  height: 12px;
  margin-top: 1px;
  font-size: 10px;
  color: #888;
  gap: 6px;
}

.legend span {
  order: 1;
  margin-left: 0;
}

.legend::before {
  content: "";
  width: 12px;
  height: 1px;
  background: #ccc;
}

.legend::after {
  content: "";
  order: 2;
  flex: 1;
  height: 1px;
  background: #ddd;
}

.plu-legend {
  height: 12px;
  margin-top: 0;
}

.mt0 { margin-top: 0; }
.mt1 { margin-top: 1px; }
.mt2 { margin-top: 2px; }
.mt3 { margin-top: 3px; }
.mt4 { margin-top: 4px; }
.mt5 { margin-top: 5px; }
.mt6 { margin-top: 6px; }
.mt7 { margin-top: 7px; }

.search-row {
  height: 21px;
  justify-content: space-between;
}

.text-box {
  box-sizing: border-box;
  width: 138px;
  height: 21px;
  border: 1px solid #8f8f8f;
  background: #fff;
}

.text-box.wide {
  width: 143px;
  margin-top: 2px;
}

.hint {
  margin-top: 3px;
  padding-right: 6px;
  text-align: right;
  font-size: 7.500px;
  line-height: 10px;
  color: #8a8a8a;
}

.hint.small {
  margin: 0 0 0 auto;
  padding: 0 2px 0 0;
  line-height: 11px;
}

.trade-main {
  width: 575px;
  flex: none;
  margin-left: 6px;
}

.info {
  position: relative;
  height: 24px;
  display: flex;
  align-items: center;
}

.trade-info {
  margin: 9px 0 2px;
}

.tag {
  box-sizing: border-box;
  width: 69px;
  height: 16px;
  flex: none;
  border: 1px solid #99a05c;
  border-radius: 4px;
  font-size: 7.500px;
  line-height: 14px;
  text-align: center;
  font-weight: 700;
  color: #8a9040;
  background: #fff;
  white-space: nowrap;
}

.info-text {
  margin-left: 10px;
  font-size: 9.800px;
  font-weight: 500;
  color: #868a22;
  white-space: nowrap;
  letter-spacing: 0.300px;
}

.info-text.wide-text {
  margin-left: 8px;
  font-size: 10px;
  letter-spacing: 0.700px;
}

.pager {
  position: absolute;
  right: 0;
  top: 2px;
  display: flex;
  gap: 14px;
}

.nav-arrow {
  width: 20px;
  height: 20px;
}

.trade-scroll {
  display: flex;
  align-items: flex-start;
  gap: 4px;
}

table {
  border-collapse: separate;
  border-spacing: 0;
  table-layout: fixed;
}

.trade-table {
  width: 552px;
  height: 324px;
  box-sizing: border-box;
  border: 1px solid #777;
  font-family: "DejaVu Sans", "Noto Sans CJK JP", sans-serif;
  font-size: 9.300px;
  color: #4c4c4c;
}

.tc1 { width: 126px; }
.tc2 { width: 106px; }

.trade-table th {
  height: 29px;
  padding: 0 10px 0 0;
  text-align: right;
  font-family: "Noto Sans CJK JP", sans-serif;
  font-size: 10px;
  font-weight: 400;
  color: #555;
  border-right: 1px solid #eee;
}

.trade-table th.left,
.plu-table th.left {
  text-align: left;
  padding-left: 5px;
}

.trade-table td {
  height: 29.300px;
  padding: 0 2px 0 0;
  text-align: right;
  white-space: nowrap;
  border-bottom: 1px solid rgba(255, 255, 255, 0.45);
}

.trade-table .t-name {
  text-align: left;
  padding-left: 3px;
  font-family: "Noto Sans CJK JP", sans-serif;
  background: #f7f6f2;
}

.t-base {
  background: #edf6e4;
}

.t-cmp {
  background: #dcebcd;
}

.dark .t-name {
  background: #e7e6e1;
}

.dark .t-base {
  background: #e0e8d8;
}

.dark .t-cmp {
  background: #cedcc1;
}

.total td {
  background: #f9dd9b !important;
  color: #bb5a16;
}

.total .t-cmp {
  background: #f6d999 !important;
}

.scrollbar {
  box-sizing: border-box;
  width: 16px;
  background: #f0f0f0;
  position: relative;
  flex: none;
}

.trade-bar {
  height: 324px;
}

.thumb {
  position: absolute;
  left: 0;
  right: 0;
  top: 15px;
  height: 110px;
  background: #c9c9c9;
}

.chev-up,
.chev-down {
  position: absolute;
  left: 5px;
  width: 5px;
  height: 5px;
  border-top: 1.500px solid #444;
  border-left: 1.500px solid #444;
  transform: rotate(45deg);
}

.chev-up {
  top: 6px;
}

.chev-down {
  bottom: 6px;
  transform: rotate(225deg);
}

.win-foot {
  display: flex;
  align-items: flex-start;
}

.trade-foot {
  padding: 7px 0 0 116px;
  gap: 22px;
}

.tool {
  width: 40px;
  display: flex;
  flex-direction: column;
  align-items: center;
  font-size: 10px;
  line-height: 14px;
  white-space: nowrap;
}

.tool-ico {
  width: 30px;
  height: 26px;
}

.tool-report {
  color: #8f8f3e;
  text-shadow: 0 0 2px #d8d8c0;
}

.tool-csv {
  color: #4d5f70;
  letter-spacing: 1px;
  text-shadow: 0 0 2px #c8d4de;
}

.plu-side .row-end {
  gap: 4px;
}

.opts {
  display: grid;
  grid-template-columns: 53px 1fr;
  column-gap: 7px;
}

.opts-left {
  display: flex;
  flex-direction: column;
}

.class-opts {
  height: 68px;
}

.class-opts .opts-left {
  padding-top: 3px;
}

.sort-opts {
  height: 72px;
}

.sort-opts .opts-left {
  padding-top: 3px;
}

.opt-box {
  box-sizing: border-box;
  display: flex;
  flex-direction: column;
  justify-content: center;
  border: 1px solid #e6e6e6;
  padding-left: 6px;
  gap: 5px;
}

.box-a {
  height: 42px;
  margin-top: 4px;
}

.box-b {
  height: 43px;
  margin-top: 14px;
  gap: 6px;
}

.radio {
  display: flex;
  align-items: center;
  gap: 3px;
  font-size: 9.800px;
  line-height: 13px;
  color: #707070;
  white-space: nowrap;
}

.r {
  width: 12px;
  height: 12px;
  flex: none;
  box-sizing: border-box;
  border: 1.500px solid #7c8c98;
  border-radius: 50%;
  background: #fff;
}

.r.on {
  background: radial-gradient(circle at 45% 40%, #78b2e6, #3f7fb8);
  border-color: #8ea4b4;
}

.opt-grid {
  display: grid;
  align-content: start;
}

.class-grid {
  grid-template-columns: 74px 1fr;
  grid-auto-rows: 18.500px;
  padding-top: 3px;
}

.sort-grid {
  grid-template-columns: 64px 1fr;
  grid-auto-rows: 17px;
  padding-top: 3px;
}

.radio.full {
  grid-column: 1 / span 2;
}

.search-block {
  height: 20px;
  margin-top: 1px;
  display: flex;
  align-items: center;
}

.plu-main {
  width: 593px;
  flex: none;
  margin-left: 6px;
}

.plu-info {
  margin-top: 7px;
  height: 24px;
  margin-bottom: 9px;
}

.plu-table {
  width: 593px;
  box-sizing: border-box;
  border: 1px solid #7e7e7e;
  font-family: "DejaVu Sans", "Noto Sans CJK JP", sans-serif;
  font-size: 9.500px;
  color: #4a4a4a;
}

.pc1 { width: 80px; }
.pc2 { width: 103px; }
.pc3 { width: 62px; }
.pc4 { width: 74px; }
.pc5 { width: 41px; }
.pc6 { width: 53px; }
.pc7 { width: 64px; }

.plu-table th {
  height: 25px;
  padding: 0 8px 0 0;
  text-align: right;
  font-family: "Noto Sans CJK JP", sans-serif;
  font-size: 10px;
  font-weight: 400;
  color: #555;
  white-space: nowrap;
  border-right: 1px solid #eee;
}

.plu-table th.center {
  text-align: center;
  padding: 0;
}

.plu-table th.plu-name {
  padding-left: 7px;
  letter-spacing: 2px;
}

.plu-table td {
  height: 26.100px;
  padding: 0 2px 0 0;
  text-align: right;
  white-space: nowrap;
  box-sizing: border-box;
  border-bottom: 1px solid rgba(255, 255, 255, 0.55);
}

.plu-table td.r3 {
  padding-right: 3px;
}

.plu-table td.c-id {
  background: #f6f5f1;
}

.plu-table td.center {
  text-align: center;
  padding: 0;
}

.plu-table td.name {
  text-align: left;
  padding-left: 3px;
  font-family: "Noto Sans CJK JP", sans-serif;
  font-size: 10px;
}

.c-base {
  background: #edf6e6;
}

.c-rate {
  background: #f5fdec;
}

.c-cmp {
  background: #dcedcb;
}

.rate-cell {
  display: flex;
  justify-content: space-between;
  align-items: center;
  padding-left: 3px;
}

.trend {
  width: 10px;
  height: 14px;
  flex: none;
  margin-top: 2px;
}

.picked td {
  background: linear-gradient(#a9d6fa, #c4e2fb 55%, #a7d3f7) !important;
  color: #25389a;
}

.plu-total {
  margin-top: 3px;
}

.plu-total td {
  height: 25px;
}

.plu-bar {
  height: 318px;
  margin: 40px 0 0 3px;
}

.plu-foot {
  padding: 9px 0 0 117px;
  gap: 20px;
}

.plu-foot .tool-ico {
  height: 24px;
}

.dbl-note {
  margin: 14px 0 0 159px;
  font-size: 7.600px;
  color: #7a7a7a;
  white-space: nowrap;
}

.plain-close {
  margin-left: 153px;
  color: #9a9a9a;
  font-size: 10px;
  line-height: 13px;
}

.plain-close .door {
  height: 24px;
}

.rep-title {
  margin: 27px 0 0 57px;
  font-size: 9.800px;
  line-height: 14px;
  font-weight: 400;
  color: #222;
  white-space: nowrap;
}

.rep-top {
  display: flex;
  margin-top: 10px;
}

.cond {
  position: relative;
  box-sizing: border-box;
  width: 459px;
  height: 24px;
  margin-left: 4px;
  border: 1px solid #777;
  border-radius: 4px;
  font-size: 6px;
  color: #444;
}

.cond-legend {
  position: absolute;
  top: -5px;
  left: 8px;
  padding: 0 4px;
  background: #fff;
  font-size: 5px;
  line-height: 8px;
}

.cond-text {
  position: absolute;
  top: 7px;
  left: 12px;
  line-height: 9px;
  white-space: nowrap;
}

.cond-count {
  position: absolute;
  right: 4px;
  bottom: 1px;
  line-height: 9px;
  white-space: nowrap;
}

.meta {
  flex: 1;
  margin: 0 3px 0 13px;
  font-size: 5px;
  line-height: 8.500px;
  color: #555;
  white-space: nowrap;
}

.meta-last {
  display: flex;
  justify-content: space-between;
  margin-top: 1px;
}

.thick {
  height: 3px;
  margin-top: 4px;
  background: #2a2a2a;
}

.rep-table {
  width: 652px;
  margin-left: 3px;
  font-family: "Liberation Sans", "Noto Sans CJK JP", sans-serif;
  font-size: 7.500px;
  color: #444;
}

.rc-code { width: 79px; }
.rc-name { width: 97px; }
.rc45 { width: 45px; }
.rc39 { width: 39px; }
.rc60 { width: 59px; }
.rc24 { width: 24px; }
.rc26 { width: 26px; }
.rc22 { width: 22px; }
.rc10 { width: 9px; }
.rc41 { width: 40px; }

.group th {
  height: 10px;
  padding: 0;
  font-weight: 400;
  font-size: 7px;
  line-height: 9px;
}

.group .grp {
  background: #dedede;
  border-bottom: 1px solid #777;
  text-align: center;
}

.group .none {
  background: #fff;
}

.heads th {
  height: 10px;
  padding: 0;
  text-align: right;
  font-size: 7.200px;
  font-weight: 400;
  line-height: 10px;
  white-space: nowrap;
  overflow: visible;
  border-bottom: 3px solid #333;
}

.heads th.center {
  text-align: center;
}

.heads th.left {
  text-align: left;
}

.heads .sales-head {
  text-align: left;
  padding-left: 2px;
}

.heads .rate-head {
  padding-right: 4px;
}

.rep-table td {
  height: 15.500px;
  padding: 0;
  text-align: right;
  white-space: nowrap;
  line-height: 10px;
}

.rep-table td.center {
  text-align: center;
}

.rep-table td.left {
  text-align: left;
}

.rep-table tbody tr:nth-child(even) td {
  background: #ececec;
  background-clip: content-box;
  border-bottom: 1px solid #fff;
  box-sizing: border-box;
}

.arrow-cell {
  padding-left: 13px !important;
  text-align: center !important;
}

.trend.small {
  display: block;
  width: 7px;
  height: 9px;
  margin: 0 auto;
}

.end-line {
  height: 3px;
  margin-top: 1px;
  background: #666;
}
</style>
